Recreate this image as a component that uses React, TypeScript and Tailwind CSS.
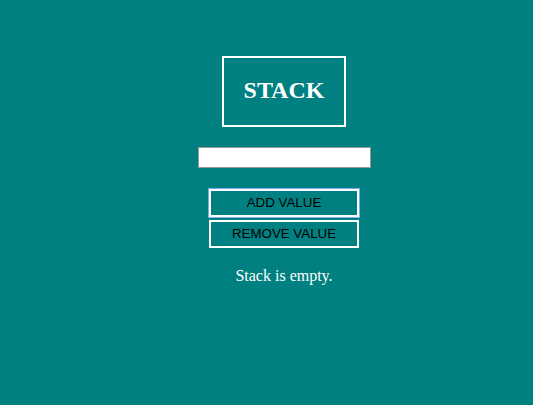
export default function App() {
  return (
    <div className="min-h-[405px] w-full bg-[#008080] pl-[35px] pt-[56px]" style={{ fontFamily: '"Liberation Serif", serif' }}>
      <div className="flex flex-col items-center">
        <div className="box-border flex h-[71px] w-[124px] items-center justify-center border-2 border-white pb-[3px]">
          <h1 className="text-[24px] font-bold leading-none text-white" style={{ fontFamily: '"Liberation Serif", serif' }}>STACK</h1>
        </div>
        <input
          type="text"
          className="mt-[20px] box-border h-[21px] w-[173px] border border-[#999] bg-white px-1 text-[13px] outline-none"
        />
        <button
          className="mt-[21px] box-border flex h-[28px] w-[150px] items-center justify-center border-2 border-white bg-transparent text-[13.33px] text-black shadow-[0_0_0_1px_#7eaee8]"
          style={{ fontFamily: '"Liberation Sans", sans-serif' }}
        >
          ADD VALUE
        </button>
        <button
          className="mt-[3px] box-border flex h-[28px] w-[150px] items-center justify-center border-2 border-white bg-transparent text-[13.33px] text-black"
          style={{ fontFamily: '"Liberation Sans", sans-serif' }}
        >
          REMOVE VALUE
        </button>
        <p className="mt-[16px] text-[16px] text-white">Stack is empty.</p>
      </div>
    </div>
  );
}
